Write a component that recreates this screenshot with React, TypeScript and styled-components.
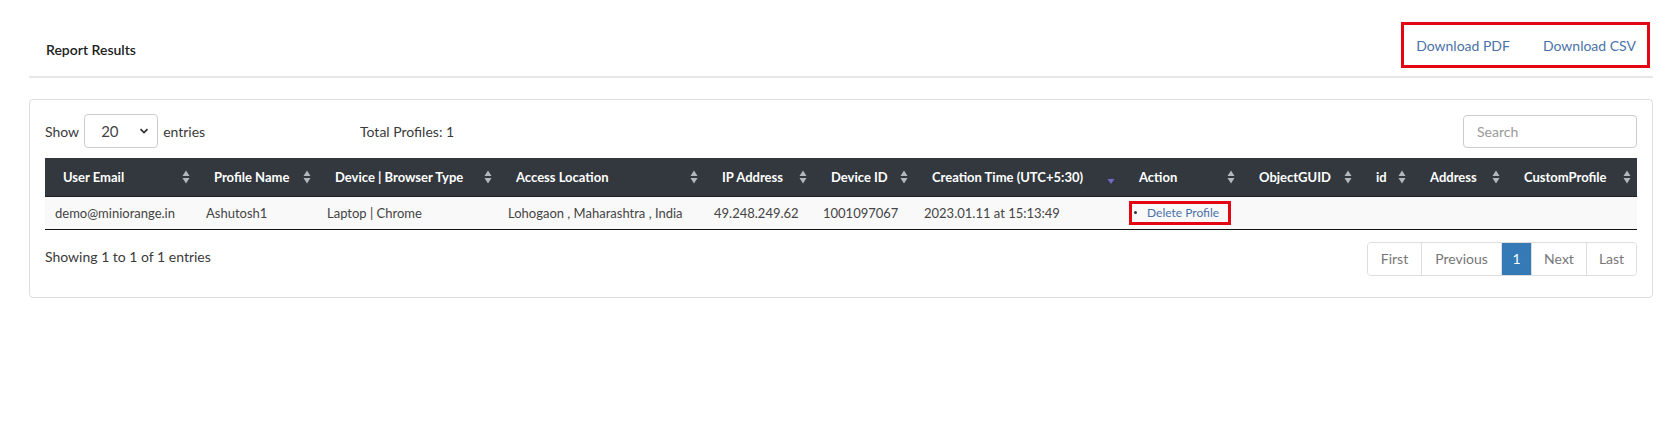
import React from 'react';
import styled, { createGlobalStyle } from 'styled-components';

const GlobalStyle = createGlobalStyle`
  html, body {
    margin: 0;
    padding: 0;
    background: #ffffff;
  }
  body {
    font-family: Lato, "Liberation Sans", Arial, sans-serif;
    color: #333333;
  }
  * {
    box-sizing: border-box;
  }
`;

const Page = styled.div`
  padding: 0 27px 0 29px;
`;

const TopBar = styled.div`
  display: flex;
  flex-direction: row;
  justify-content: space-between;
  align-items: center;
  padding-top: 22px;
  padding-bottom: 8px;
  border-bottom: 2px solid #e7e7e7;
`;

const Title = styled.h5`
  margin: 0;
  padding: 9px 0 0 17px;
  font-size: 14px;
  font-weight: 600;
  color: #222222;
`;

const Highlight = styled.div`
  border: 3px solid #e30613;
`;

const Downloads = styled(Highlight)`
  display: flex;
  flex-direction: row;
  align-items: center;
  gap: 33px;
  height: 46px;
  margin-right: 3px;
  padding: 0 11px 0 12px;
`;

const TextLink = styled.a`
  font-size: 14px;
  color: #4a72a8;
  text-decoration: none;
  cursor: pointer;
`;

const Card = styled.div`
  margin-top: 21px;
  border: 1px solid #dddddd;
  border-radius: 4px;
  padding: 14px 15px 21px 15px;
`;

const Controls = styled.div`
  display: grid;
  grid-template-columns: 315px auto 1fr auto;
  align-items: center;
  height: 34px;
  font-size: 14px;
  color: #3a3a3a;
`;

const LengthControl = styled.label`
  display: flex;
  flex-direction: row;
  align-items: center;
  gap: 5px;
`;

const SelectBox = styled.div`
  display: flex;
  flex-direction: row;
  align-items: center;
  justify-content: space-between;
  width: 74px;
  height: 34px;
  padding: 0 8px 0 16px;
  border: 1px solid #cccccc;
  border-radius: 4px;
  font-size: 15px;
  color: #444444;
`;

const SearchInput = styled.input`
  width: 174px;
  height: 33px;
  padding: 0 13px;
  border: 1px solid #cccccc;
  border-radius: 4px;
  font-family: inherit;
  font-size: 14px;
  outline: none;
  &::placeholder {
    color: #999999;
  }
`;

const Table = styled.table`
  width: 100%;
  margin-top: 10px;
  border-collapse: collapse;
  table-layout: fixed;
`;

const HeadCell = styled.th`
  height: 38px;
  padding: 0 6px 0 18px;
  background: #32383e;
  color: #ffffff;
  font-size: 13px;
  font-weight: 700;
  text-align: left;
  white-space: nowrap;
  border-bottom: 1px solid #1d2124;
`;

const HeadInner = styled.div`
  display: flex;
  flex-direction: row;
  align-items: center;
  justify-content: space-between;
`;

const Row = styled.tr`
  background: #f9f9f9;
  border-bottom: 1px solid #111111;
`;

const Cell = styled.td`
  height: 33px;
  padding: 0 10px;
  font-size: 13px;
  color: #444444;
  white-space: nowrap;
`;

const ActionList = styled.ul`
  margin: 0;
  padding: 0;
  list-style: none;
`;

const ActionItem = styled(Highlight)`
  display: inline-flex;
  flex-direction: row;
  align-items: center;
  gap: 10px;
  height: 24px;
  margin-left: -2px;
  padding: 0 9px 0 2px;
  font-size: 12px;

  &::before {
    content: "";
    width: 3px;
    height: 3px;
    border-radius: 50%;
    background: #333333;
  }
`;

const ActionLink = styled(TextLink)`
  font-size: 12px;
`;

const Footer = styled.div`
  display: flex;
  flex-direction: row;
  justify-content: space-between;
  align-items: center;
  margin-top: 12px;
  font-size: 14px;
  color: #3a3a3a;
`;

const Summary = styled.span`
  margin-top: -4px;
`;

const Pager = styled.div`
  display: flex;
  flex-direction: row;
  border: 1px solid #dddddd;
  border-radius: 4px;
  overflow: hidden;
`;

const PageButton = styled.span<{ $active?: boolean; $w: number }>`
  display: flex;
  align-items: center;
  justify-content: center;
  width: ${(p) => p.$w}px;
  height: 32px;
  font-size: 14px;
  color: ${(p) => (p.$active ? '#ffffff' : '#777777')};
  background: ${(p) => (p.$active ? '#337ab7' : '#ffffff')};
  & + & {
    border-left: 1px solid #dddddd;
  }
`;

function SortIcon(props: { active?: boolean }) {
  if (props.active) {
    return (
      <svg width="8" height="16" viewBox="0 0 8 16" style={{ flex: 'none' }}>
        <path d="M0.5 10 L7.5 10 L4 15 Z" fill="#7468c8" />
      </svg>
    );
  }
  return (
    <svg width="8" height="16" viewBox="0 0 8 16" style={{ flex: 'none' }}>
      <path d="M0.5 7 L7.5 7 L4 1.5 Z" fill="#b4b8bd" />
      <path d="M0.5 9 L7.5 9 L4 14.5 Z" fill="#b4b8bd" />
    </svg>
  );
}

function Chevron() {
  return (
    <svg width="10" height="10" viewBox="0 0 10 10">
      <path d="M1.5 3.2 L5 6.6 L8.5 3.2" fill="none" stroke="#333" strokeWidth="1.8" />
    </svg>
  );
}

const columns: { title: string; width: number; active?: boolean }[] = [
  { title: 'User Email', width: 151 },
  { title: 'Profile Name', width: 121 },
  { title: 'Device | Browser Type', width: 181 },
  { title: 'Access Location', width: 206 },
  { title: 'IP Address', width: 109 },
  { title: 'Device ID', width: 101 },
  { title: 'Creation Time (UTC+5:30)', width: 207, active: true },
  { title: 'Action', width: 120 },
  { title: 'ObjectGUID', width: 117 },
  { title: 'id', width: 54 },
  { title: 'Address', width: 94 },
  { title: 'CustomProfile', width: 131 },
];

const rows = [
  {
    email: 'demo@miniorange.in',
    profile: 'Ashutosh1',
    device: 'Laptop | Chrome',
    location: 'Lohogaon , Maharashtra , India',
    ip: '49.248.249.62',
    deviceId: '1001097067',
    created: '2023.01.11 at 15:13:49',
  },
];

const pages = [
  { label: 'First', w: 53 },
  { label: 'Previous', w: 80 },
  { label: '1', w: 30, active: true },
  { label: 'Next', w: 55 },
  { label: 'Last', w: 50 },
];

export default function App() {
  return (
    <Page>
      <GlobalStyle />
      <TopBar>
        <Title>Report Results</Title>
        <Downloads>
          <TextLink>Download PDF</TextLink>
          <TextLink>Download CSV</TextLink>
        </Downloads>
      </TopBar>

      <Card>
        <Controls>
          <LengthControl>
            Show
            <SelectBox>
              20
              <Chevron />
            </SelectBox>
            entries
          </LengthControl>
          <span>Total Profiles: 1</span>
          <span />
          <SearchInput placeholder="Search" />
        </Controls>

        <Table>
          <colgroup>
            {columns.map((c) => (
              <col key={c.title} style={{ width: c.width }} />
            ))}
          </colgroup>
          <thead>
            <tr>
              {columns.map((c) => (
                <HeadCell key={c.title}>
                  <HeadInner>
                    {c.title}
                    <SortIcon active={c.active} />
                  </HeadInner>
                </HeadCell>
              ))}
            </tr>
          </thead>
          <tbody>
            {rows.map((r) => (
              <Row key={r.email}>
                <Cell>{r.email}</Cell>
                <Cell>{r.profile}</Cell>
                <Cell>{r.device}</Cell>
                <Cell>{r.location}</Cell>
                <Cell>{r.ip}</Cell>
                <Cell>{r.deviceId}</Cell>
                <Cell>{r.created}</Cell>
                <Cell>
                  <ActionList>
                    <ActionItem as="li">
                      <ActionLink>Delete Profile</ActionLink>
                    </ActionItem>
                  </ActionList>
                </Cell>
                <Cell />
                <Cell />
                <Cell />
                <Cell />
              </Row>
            ))}
          </tbody>
        </Table>

        <Footer>
          <Summary>Showing 1 to 1 of 1 entries</Summary>
          <Pager>
            {pages.map((p) => (
              <PageButton key={p.label} $w={p.w} $active={p.active}>
                {p.label}
              </PageButton>
            ))}
          </Pager>
        </Footer>
      </Card>
    </Page>
  );
}
